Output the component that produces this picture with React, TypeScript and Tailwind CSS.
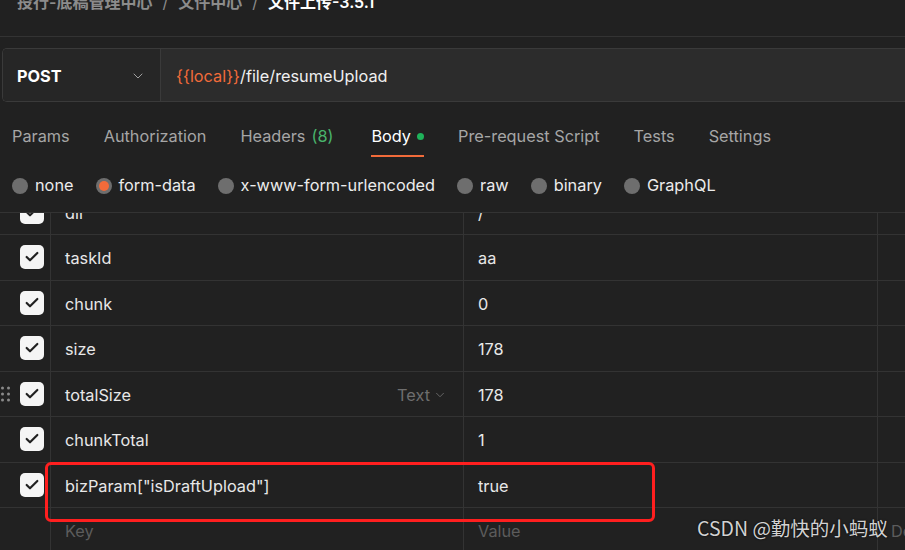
import { Check, ChevronDown } from "lucide-react";

const rows = [
  { key: "dir", value: "/" },
  { key: "taskId", value: "aa" },
  { key: "chunk", value: "0" },
  { key: "size", value: "178" },
  { key: "totalSize", value: "178", hover: true },
  { key: "chunkTotal", value: "1" },
  { key: 'bizParam["isDraftUpload"]', value: "true" },
];

const tabs = ["Params", "Authorization", "Headers", "Body", "Pre-request Script", "Tests", "Settings"];
const bodyTypes = ["none", "form-data", "x-www-form-urlencoded", "raw", "binary", "GraphQL"];

function Checkbox() {
  return (
    <div className="ml-[20px] flex h-[24px] w-[24px] items-center justify-center rounded-[5px] bg-[#f5f5f5]">
      <Check className="h-[16px] w-[16px] text-[#212121]" strokeWidth={3.25} />
    </div>
  );
}

function DragHandle() {
  return (
    <div className="absolute left-[1px] top-1/2 grid -translate-y-1/2 grid-cols-2 gap-x-[3px] gap-y-[3px]">
      {[0, 1, 2, 3, 4, 5].map((i) => (
        <span key={i} className="h-[3px] w-[3px] rounded-full bg-[#8a8a8a]" />
      ))}
    </div>
  );
}

export default function App() {
  return (
    <div className="relative flex h-[550px] w-[905px] flex-col overflow-hidden bg-[#212121] font-['Inter','Noto_Sans_CJK_SC',sans-serif] text-[16.3px] text-[#e8e8e8]">
      {/* breadcrumb, scrolled slightly out of view */}
      <div className="h-[37px] shrink-0 overflow-hidden border-b border-[#333333]">
        <div className="-mt-[10px] flex items-center gap-[10px] pl-[17px] text-[16px] leading-[24px]">
          <span className="font-semibold text-[#8c8c8c]">投行-底稿管理中心</span>
          <span className="text-[#8c8c8c]">/</span>
          <span className="font-semibold text-[#8c8c8c]">文件中心</span>
          <span className="text-[#8c8c8c]">/</span>
          <span className="font-semibold text-white">文件上传-3.5.1</span>
        </div>
      </div>

      {/* method + url */}
      <div className="ml-[2px] mt-[11px] flex h-[54px] shrink-0 overflow-hidden rounded-l-[5px] border border-r-0 border-[#3a3a3a]">
        <div className="flex w-[158px] items-center justify-between border-r border-[#3a3a3a] bg-[#262626] pl-[14px] pr-[14px] pt-[2px]">
          <span className="font-bold text-white">POST</span>
          <ChevronDown className="h-[16px] w-[16px] text-[#a0a0a0]" strokeWidth={1.5} />
        </div>
        <div className="flex flex-1 items-center bg-[#2c2c2c] pl-[15px] pt-[2px]">
          <span className="text-[#f26b3a]">{"{{local}}"}</span>
          <span className="text-[#f0f0f0]">/file/resumeUpload</span>
        </div>
      </div>

      {/* request tabs */}
      <div className="flex shrink-0 gap-[34px] pl-[12px]">
        {tabs.map((t) => (
          <div
            key={t}
            className={
              t === "Body"
                ? "ml-[4px] flex items-center gap-[6px] border-b-2 border-[#f26b3a] pb-[7px] pt-[22px] leading-[24px] text-white"
                : "flex items-center border-b-2 border-transparent pb-[7px] pt-[22px] leading-[24px] text-[#a6a6a6]"
            }
          >
            {t}
            {t === "Headers" && <span className="ml-[6px] text-[#49b36c]">(8)</span>}
            {t === "Body" && <span className="h-[7px] w-[7px] rounded-full bg-[#1fb25a]" />}
          </div>
        ))}
      </div>

      {/* body type radios */}
      <div className="flex h-[56px] shrink-0 items-center gap-[22px] border-b border-[#333333] pl-[12px] pt-[2px]">
        {bodyTypes.map((b) => (
          <div key={b} className="flex items-center gap-[7px]">
            {b === "form-data" ? (
              <span className="flex h-[16px] w-[16px] items-center justify-center rounded-full bg-[#6e6e6e]">
                <span className="h-[10px] w-[10px] rounded-full bg-[#f26b3a]" />
              </span>
            ) : (
              <span className="h-[16px] w-[16px] rounded-full bg-[#6e6e6e]" />
            )}
            <span className="text-[#ececec]">{b}</span>
          </div>
        ))}
      </div>

      {/* form-data table, scrolled */}
      <div className="flex-1 overflow-hidden">
        <div className="-mt-[23.5px]">
          {rows.map((r) => (
            <div key={r.key} className="grid h-[45.5px] grid-cols-[51px_413px_414px_1fr] border-b border-[#333333]">
              <div className="relative flex items-center border-r border-[#333333]">
                {r.hover && <DragHandle />}
                <Checkbox />
              </div>
              <div className="flex items-center justify-between border-r border-[#333333] pl-[14px] pr-[16px] pt-[2px]">
                <span>{r.key}</span>
                {r.hover && (
                  <span className="flex items-center gap-[3px] text-[#6e6e6e]">
                    Text
                    <ChevronDown className="h-[14px] w-[14px]" strokeWidth={1.5} />
                  </span>
                )}
              </div>
              <div className="flex items-center border-r border-[#333333] pl-[14px] pt-[2px]">{r.value}</div>
              <div />
            </div>
          ))}
          <div className="grid h-[45.5px] grid-cols-[51px_413px_414px_1fr] text-[#5c5c5c]">
            <div className="border-r border-[#333333]" />
            <div className="flex items-center border-r border-[#333333] pl-[14px]">Key</div>
            <div className="flex items-center border-r border-[#333333] pl-[14px]">Value</div>
            <div className="flex items-center overflow-hidden whitespace-nowrap pl-[13px]">Description</div>
          </div>
        </div>
      </div>

      {/* highlight drawn over the screenshot */}
      <div className="absolute left-[45px] top-[462px] h-[60px] w-[610px] rounded-[6px] border-[3px] border-[#ff1f1f]" />

      {/* watermark */}
      <div className="absolute left-[697px] top-[515px] whitespace-nowrap font-['Noto_Sans_CJK_SC',sans-serif] text-[19.5px] leading-[26px] text-[#d2d2d2] [text-shadow:0_0_2px_#000]">
        CSDN @勤快的小蚂蚁
      </div>
    </div>
  );
}
